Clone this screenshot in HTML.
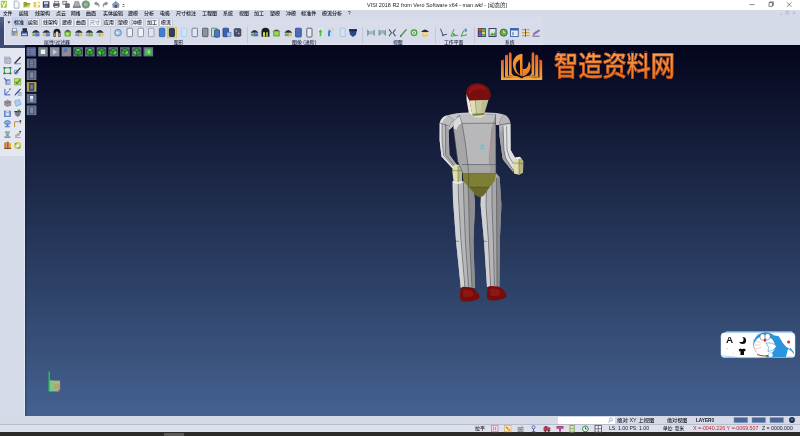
<!DOCTYPE html>
<html lang="zh-CN">
<head>
<meta charset="utf-8">
<title>VISI 2018 R2 from Vero Software x64 - man.wkf</title>
<style>
html,body{margin:0;padding:0;}
body{width:800px;height:436px;overflow:hidden;position:relative;background:#d5dae9;font-family:"Liberation Sans","Noto Sans CJK SC",sans-serif;}
.abs{position:absolute;}
#title{left:0;top:0;width:800px;height:9.6px;background:#fff;}
#chrome{left:0;top:9.6px;width:800px;height:35.4px;background:#d5dae9;}
#leftdark{left:0;top:17.4px;width:4px;height:31px;background:linear-gradient(to bottom,#56668e,#3d4b73 40%);}
#ribbon{left:4px;top:17.4px;width:539px;height:27.4px;background:linear-gradient(to bottom,#d9ddeb,#d7dbea);border-left:1.6px solid #e6e9f3;border-bottom:0.6px solid #e2e5f0;box-sizing:border-box;}
#leftband{left:0;top:45px;width:25.3px;height:3.4px;background:#3d4b73;}
#lefttool{left:0;top:48px;width:25.3px;height:107.5px;background:#e3e7f1;border-bottom:0.6px solid #c6cbdb;}
#leftrest{left:0;top:156px;width:25.3px;height:260px;background:#d6dbea;}
#view{left:25.3px;top:45px;width:775px;height:371px;background:linear-gradient(to bottom,#04051c 0%,#446290 100%);}
#status1{left:0;top:416px;width:800px;height:8px;background:#d5dae9;}
#status2{left:0;top:424px;width:800px;height:9px;background:#dde1ee;border-top:1px solid #b9bdc9;box-sizing:border-box;}
#taskbar{left:0;top:432.4px;width:800px;height:3.6px;background:#2d2a27;}
.t{position:absolute;white-space:pre;color:#14141e;line-height:1;font-weight:500;transform-origin:0 0;z-index:2;}
.tabbox{position:absolute;top:18.6px;height:7.6px;background:#eef0f8;box-shadow:0 0 0 0.5px #b2b8cc;box-sizing:border-box;}
.sep{position:absolute;top:27px;width:0.6px;height:16px;background:#c2c7d9;}
#gfx{position:absolute;left:0;top:0;width:800px;height:436px;}
#logo{background:linear-gradient(to bottom,#f8a456 0%,#f2842a 55%,#e87018 100%);-webkit-background-clip:text;background-clip:text;-webkit-text-fill-color:transparent;color:#ef7f22;-webkit-text-stroke:0.5px rgba(176,62,20,0.85);}
</style>
</head>
<body>
<div class="abs" id="title"></div>
<div class="abs" id="chrome"></div>
<div class="abs" id="ribbon"></div>
<div class="abs" id="leftdark"></div>
<div class="abs" id="leftband"></div>
<div class="abs" id="lefttool"></div>
<div class="abs" id="leftrest"></div>
<div class="abs" id="view"></div>
<div class="abs" id="status1"></div>
<div class="abs" id="status2"></div>
<div class="abs" id="taskbar"></div>
<div class="tabbox" style="left:12.5px;width:13.0px;background:#c6d4ee;top:17.6px;height:8.8px;box-shadow:0 0 0 0.4px #a8bce0;"></div>
<div class="tabbox" style="left:27.5px;width:11.5px;background:#eef0f8;"></div>
<div class="tabbox" style="left:41.5px;width:17.0px;background:#eef0f8;"></div>
<div class="tabbox" style="left:61px;width:11.5px;background:#eef0f8;"></div>
<div class="tabbox" style="left:75px;width:11.5px;background:#eef0f8;"></div>
<div class="tabbox" style="left:89px;width:11.5px;background:#eef0f8;"></div>
<div class="tabbox" style="left:103.5px;width:11.5px;background:#eef0f8;"></div>
<div class="tabbox" style="left:117.5px;width:11.5px;background:#eef0f8;"></div>
<div class="tabbox" style="left:131.5px;width:11.5px;background:#eef0f8;"></div>
<div class="tabbox" style="left:146px;width:11.5px;background:#eef0f8;"></div>
<div class="tabbox" style="left:160px;width:12px;background:#eef0f8;"></div>
<div class="sep" style="left:110px"></div>
<div class="sep" style="left:247px"></div>
<div class="sep" style="left:362px"></div>
<div class="sep" style="left:435px"></div>
<div class="sep" style="left:474px"></div>
<div class="abs" style="left:24.4px;top:48.4px;width:0.9px;height:367.6px;background:#e2e8f6"></div>
<div class="abs" style="left:25.3px;top:45px;width:1.6px;height:371px;background:linear-gradient(to right,rgba(10,14,40,0.35),rgba(10,14,40,0))"></div>
<div class="abs" style="left:558px;top:416.5px;width:57px;height:7px;background:#fff"></div>
<div class="abs" style="left:164px;top:432.6px;width:20px;height:3.4px;background:#5c5a57"></div>
<span class="t" style="left:367.0px;top:2.3px;font-size:10.6px;font-weight:400;color:#1c1c1c;transform:scale(0.5136,0.5000);">VISI 2018 R2 from Vero Software x64 - man.wkf - [动态的]</span>
<span class="t" style="left:3.0px;top:11.3px;font-size:10px;font-weight:500;color:#14141e;transform:scale(0.4650,0.5000);">文件</span>
<span class="t" style="left:19.0px;top:11.3px;font-size:10px;font-weight:500;color:#14141e;transform:scale(0.4750,0.5000);">编辑</span>
<span class="t" style="left:35.0px;top:11.3px;font-size:10px;font-weight:500;color:#14141e;transform:scale(0.5000,0.5000);">线架构</span>
<span class="t" style="left:56.0px;top:11.3px;font-size:10px;font-weight:500;color:#14141e;transform:scale(0.5000,0.5000);">点云</span>
<span class="t" style="left:71.0px;top:11.3px;font-size:10px;font-weight:500;color:#14141e;transform:scale(0.4750,0.5000);">网格</span>
<span class="t" style="left:86.0px;top:11.3px;font-size:10px;font-weight:500;color:#14141e;transform:scale(0.5000,0.5000);">曲面</span>
<span class="t" style="left:103.0px;top:11.3px;font-size:10px;font-weight:500;color:#14141e;transform:scale(0.5000,0.5000);">实体编辑</span>
<span class="t" style="left:128.0px;top:11.3px;font-size:10px;font-weight:500;color:#14141e;transform:scale(0.5000,0.5000);">建模</span>
<span class="t" style="left:144.0px;top:11.3px;font-size:10px;font-weight:500;color:#14141e;transform:scale(0.5000,0.5000);">分析</span>
<span class="t" style="left:160.0px;top:11.3px;font-size:10px;font-weight:500;color:#14141e;transform:scale(0.5000,0.5000);">电极</span>
<span class="t" style="left:176.0px;top:11.3px;font-size:10px;font-weight:500;color:#14141e;transform:scale(0.5000,0.5000);">尺寸标注</span>
<span class="t" style="left:202.0px;top:11.3px;font-size:10px;font-weight:500;color:#14141e;transform:scale(0.5000,0.5000);">工程图</span>
<span class="t" style="left:223.0px;top:11.3px;font-size:10px;font-weight:500;color:#14141e;transform:scale(0.5000,0.5000);">系统</span>
<span class="t" style="left:239.0px;top:11.3px;font-size:10px;font-weight:500;color:#14141e;transform:scale(0.5000,0.5000);">视图</span>
<span class="t" style="left:254.0px;top:11.3px;font-size:10px;font-weight:500;color:#14141e;transform:scale(0.5000,0.5000);">加工</span>
<span class="t" style="left:270.0px;top:11.3px;font-size:10px;font-weight:500;color:#14141e;transform:scale(0.5000,0.5000);">塑模</span>
<span class="t" style="left:286.0px;top:11.3px;font-size:10px;font-weight:500;color:#14141e;transform:scale(0.5000,0.5000);">冲模</span>
<span class="t" style="left:301.0px;top:11.3px;font-size:10px;font-weight:500;color:#14141e;transform:scale(0.5167,0.5000);">标准件</span>
<span class="t" style="left:322.0px;top:11.3px;font-size:10px;font-weight:500;color:#14141e;transform:scale(0.5000,0.5000);">模流分析</span>
<span class="t" style="left:348.0px;top:11.3px;font-size:10px;font-weight:500;color:#14141e;transform:scale(0.4674,0.5000);">?</span>
<span class="t" style="left:14.1px;top:19.6px;font-size:10px;font-weight:500;color:#14141e;transform:scale(0.4900,0.5000);">标准</span>
<span class="t" style="left:28.4px;top:19.6px;font-size:10px;font-weight:500;color:#14141e;transform:scale(0.4900,0.5000);">编辑</span>
<span class="t" style="left:42.6px;top:19.6px;font-size:10px;font-weight:500;color:#14141e;transform:scale(0.4900,0.5000);">线架构</span>
<span class="t" style="left:61.9px;top:19.6px;font-size:10px;font-weight:500;color:#14141e;transform:scale(0.4900,0.5000);">建模</span>
<span class="t" style="left:75.8px;top:19.6px;font-size:10px;font-weight:500;color:#14141e;transform:scale(0.4900,0.5000);">曲面</span>
<span class="t" style="left:89.8px;top:19.6px;font-size:10px;font-weight:500;color:#8a8ea2;transform:scale(0.4900,0.5000);">尺寸</span>
<span class="t" style="left:104.3px;top:19.6px;font-size:10px;font-weight:500;color:#14141e;transform:scale(0.4900,0.5000);">应用</span>
<span class="t" style="left:118.3px;top:19.6px;font-size:10px;font-weight:500;color:#14141e;transform:scale(0.4900,0.5000);">塑模</span>
<span class="t" style="left:132.3px;top:19.6px;font-size:10px;font-weight:500;color:#14141e;transform:scale(0.4900,0.5000);">冲模</span>
<span class="t" style="left:146.8px;top:19.6px;font-size:10px;font-weight:500;color:#14141e;transform:scale(0.4900,0.5000);">加工</span>
<span class="t" style="left:161.1px;top:19.6px;font-size:10px;font-weight:500;color:#14141e;transform:scale(0.4900,0.5000);">模流</span>
<span class="t" style="left:44.0px;top:39.5px;font-size:9.6px;font-weight:500;color:#2a3050;transform:scale(0.5134,0.5000);">属性/过滤器</span>
<span class="t" style="left:174.0px;top:39.5px;font-size:9.6px;font-weight:500;color:#2a3050;transform:scale(0.4899,0.5000);">图形</span>
<span class="t" style="left:292.0px;top:39.5px;font-size:9.6px;font-weight:500;color:#2a3050;transform:scale(0.5144,0.5000);">图像 (进阶)</span>
<span class="t" style="left:393.3px;top:39.5px;font-size:9.6px;font-weight:500;color:#2a3050;transform:scale(0.5055,0.5000);">视图</span>
<span class="t" style="left:444.0px;top:39.5px;font-size:9.6px;font-weight:500;color:#2a3050;transform:scale(0.5055,0.5000);">工作平面</span>
<span class="t" style="left:505.0px;top:39.5px;font-size:9.6px;font-weight:500;color:#2a3050;transform:scale(0.4899,0.5000);">系统</span>
<span class="t" style="left:617.0px;top:418.2px;font-size:10px;font-weight:500;color:#14141e;transform:scale(0.5457,0.5000);">绝对 XY 上视图</span>
<span class="t" style="left:667.0px;top:418.2px;font-size:10px;font-weight:500;color:#14141e;transform:scale(0.5125,0.5000);">绝对视图</span>
<span class="t" style="left:695.5px;top:418.3px;font-size:10px;font-weight:700;color:#14141e;transform:scale(0.4670,0.5000);">LAYER0</span>
<span class="t" style="left:475.0px;top:426.3px;font-size:10px;font-weight:500;color:#14141e;transform:scale(0.5000,0.5000);">拉平</span>
<span class="t" style="left:608.5px;top:426.4px;font-size:10px;font-weight:500;color:#14141e;transform:scale(0.5103,0.5000);">LS: 1.00 PS: 1.00</span>
<span class="t" style="left:663.0px;top:426.3px;font-size:10px;font-weight:500;color:#14141e;transform:scale(0.4609,0.5000);">单位: 毫米</span>
<span class="t" style="left:693.0px;top:426.4px;font-size:10px;font-weight:500;color:#cc2030;transform:scale(0.5322,0.5000);">X =-0040.226 Y =-0069.507</span>
<span class="t" style="left:761.5px;top:426.4px;font-size:10px;font-weight:500;color:#14141e;transform:scale(0.5201,0.5000);">Z = 0000.000</span>
<span class="t" id="logo" style="left:554.1px;top:52.84px;font-size:23.6px;font-weight:500;color:#ef7f22;transform:scale(1.0257,1.2100);">智造资料网</span>
<span class="t" style="left:726.4px;top:335.6px;font-size:9px;font-weight:700;color:#111;transform:scale(1.1077,1.0000);">A</span>
<svg id="gfx" viewBox="0 0 800 436" width="800" height="436">
<defs>
<filter id="b1" x="-10%" y="-10%" width="120%" height="120%"><feGaussianBlur stdDeviation="0.5"/></filter>
<filter id="b2" x="-10%" y="-10%" width="120%" height="120%"><feGaussianBlur stdDeviation="0.35"/></filter>
</defs>
<path d="M7.5 21.6h2.8l-1.4 1.8z" fill="#111"/>
<g stroke="#333" stroke-width="0.6" fill="none"><path d="M749.5 4.6h5"/><rect x="769" y="2.8" width="3.4" height="3.4"/><path d="M770 2.8v-0.9h3.4v3.4h-1"/><path d="M787 2.4l4.4 4.4M791.4 2.4l-4.4 4.4"/></g>
<g stroke="#9aa0b4" stroke-width="0.5" fill="none"><path d="M780 14.5h2.5"/><rect x="786" y="11.5" width="2.6" height="2.6"/><path d="M792.5 11.5l2.8 2.8M795.3 11.5l-2.8 2.8"/></g>
<g filter="url(#b2)"><rect x="0.8" y="0.8" width="6" height="7" rx="0.6" fill="#9ccc3c"/><path d="M2 2l1.8 4.6L5.6 2" stroke="#fff" stroke-width="1.1" fill="none"/><path d="M14.2 1h3.2l1.6 1.6v5.6h-4.8z" fill="#f4f6fa" stroke="#7a86a8" stroke-width="0.6"/><path d="M23.5 7.5l1.5-4.5h5.8l-1.5 4.5z" fill="#d8d43a"/><path d="M23.5 7.5v-5.5h3l0.8 1h2.5v1" fill="#8aa83a"/><rect x="33.5" y="2" width="6.5" height="5.5" fill="#e8cc5a"/><rect x="36" y="1" width="2" height="6.5" fill="#f8f4e0"/><rect x="37" y="3" width="3.5" height="2" fill="#f8f4e0"/><rect x="42.8" y="1.2" width="6.6" height="6.6" rx="0.5" fill="#3a3c6a"/><rect x="44" y="1.8" width="4.2" height="2.6" fill="#c8cce4"/><rect x="44.5" y="5.4" width="3" height="2.4" fill="#8a8eb8"/><rect x="53.2" y="3.2" width="6.4" height="3.6" fill="#5a5e6a"/><rect x="54.6" y="1.2" width="4.2" height="2.4" fill="#e8eaf0" stroke="#4a4e5a" stroke-width="0.5"/><rect x="54.4" y="5.8" width="4" height="2" fill="#dcdfe8" stroke="#4a4e5a" stroke-width="0.4"/><rect x="62.8" y="1.2" width="4" height="3.4" fill="#d8dce8" stroke="#4a4e5a" stroke-width="0.6"/><rect x="65.4" y="3.8" width="4" height="3.8" fill="#6a6e7a" stroke="#3a3e4a" stroke-width="0.5"/><path d="M75 1.4h3.6l2 6.2h-7.6z" fill="#a8aab0" stroke="#6a6c74" stroke-width="0.5"/><rect x="73" y="6.2" width="7.6" height="1.5" fill="#7a7c84"/><circle cx="85.8" cy="4.5" r="3.8" fill="#6c9c72"/><circle cx="85.8" cy="4.5" r="2" fill="#9ab8a0"/><circle cx="85.8" cy="4.5" r="3.8" fill="none" stroke="#8a9490" stroke-width="0.8"/><path d="M94 3.2l2.5-2v1.3c2 0 3 1.5 3 3.2 0 1-.3 1.6-.8 2.1.2-2-.6-3.1-2.2-3.1v1.4z" fill="#8a8e98"/><path d="M108.2 3.2l-2.5-2v1.3c-2 0-3 1.5-3 3.2 0 1 .3 1.6.8 2.1-.2-2 .6-3.1 2.2-3.1v1.4z" fill="#8a8e98"/><path d="M112.5 4.8l3.3-3.2 3.3 3.2v3h-6.6z" fill="#8a98b8"/><rect x="114.6" y="5" width="2.4" height="2.8" fill="#4a5478"/><path d="M112 5l3.8-3.6 3.8 3.6" stroke="#5a6488" stroke-width="0.7" fill="none"/><path d="M122.4 4h2.2l-1.1 1.3z" fill="#333"/><path d="M122.4 6.5h2.2" stroke="#333" stroke-width="0.5"/></g>
<g filter="url(#b2)"><rect x="11.5" y="30.2" width="6" height="5.5" fill="#8a93a8"/><rect x="12.5" y="28.2" width="4" height="3" fill="#e8ecf4" stroke="#66708a" stroke-width="0.5"/><rect x="15" y="33.2" width="3" height="3" fill="#d9c04a"/><rect x="21" y="31.2" width="7" height="5" fill="#3c5a9a"/><rect x="22.5" y="28.2" width="4.5" height="4" fill="#2c3144"/><rect x="22" y="33.7" width="5" height="1.5" fill="#cfd6ea"/><path d="M31.8 32.7Q35.8 27.3 39.8 32.7Z" fill="#2b2f3a"/><path d="M35.8 32.5v4" stroke="#555a66" stroke-width="0.8"/><rect x="35.9" y="33.3" width="3.6" height="3" fill="#4d79d8"/><rect x="32.3" y="33.5" width="3" height="2.6" fill="#6fb24a"/><path d="M42.3 32.7Q46.3 27.3 50.3 32.7Z" fill="#2b2f3a"/><path d="M46.3 32.5v4" stroke="#555a66" stroke-width="0.8"/><rect x="46.4" y="33.3" width="3.6" height="3" fill="#5b86dc"/><rect x="42.8" y="33.5" width="3" height="2.6" fill="#d8c23e"/><path d="M53.5 36.7v-4.5a3.5 3.5 0 0 1 7 0v4.5h-2.2v-4a1.3 1.3 0 0 0-2.6 0v4z" fill="#1d1d22"/><rect x="54" y="33.2" width="1.4" height="3" fill="#e08a2a"/><rect x="58.6" y="33.2" width="1.4" height="3" fill="#e08a2a"/><path d="M64 32.4Q67.7 27.2 71.4 32.4Z" fill="#3d4a3a"/><rect x="64.5" y="31.4" width="6.5" height="5.2" rx="1" fill="#6fb63c"/><rect x="66" y="32.7" width="3" height="2.5" fill="#b5e07a"/><path d="M74.8 32.7Q78.8 27.3 82.8 32.7Z" fill="#2b2f3a"/><path d="M78.8 32.5v4" stroke="#555a66" stroke-width="0.8"/><rect x="78.89999999999999" y="33.3" width="3.6" height="3" fill="#d8c84a"/><rect x="75.3" y="33.5" width="3" height="2.6" fill="#8a94a8"/><path d="M85.3 32.7Q89.3 27.3 93.3 32.7Z" fill="#2b2f3a"/><path d="M89.3 32.5v4" stroke="#555a66" stroke-width="0.8"/><rect x="89.39999999999999" y="33.3" width="3.6" height="3" fill="#78c048"/><rect x="85.8" y="33.5" width="3" height="2.6" fill="#9aa3b8"/><path d="M95.8 32.7Q99.8 27.3 103.8 32.7Z" fill="#2b2f3a"/><path d="M99.8 32.5v4" stroke="#555a66" stroke-width="0.8"/><rect x="99.89999999999999" y="33.3" width="3.6" height="3" fill="#e0d040"/><rect x="96.3" y="33.5" width="3" height="2.6" fill="#c8cce0"/><circle cx="118" cy="32.7" r="3.4" fill="#9fc4e8" stroke="#5a7fb0" stroke-width="0.8"/><path d="M116.5 31.2l3 1.5-3 1.5" fill="#e8f0fa"/><rect x="127" y="28.2" width="5.5" height="8.5" rx="0.8" fill="#eef0f6" stroke="#6a7086" stroke-width="0.8"/><rect x="138" y="28.2" width="5.5" height="8.5" rx="0.8" fill="#f2f3f8" stroke="#7a8096" stroke-width="0.8"/><rect x="148.5" y="28.2" width="5.5" height="8.5" rx="0.8" fill="#e4e6ee" stroke="#8a90a4" stroke-width="0.8"/><rect x="159.3" y="28.2" width="5.5" height="8.5" rx="0.8" fill="#3f7fd0" stroke="#2d5ea8" stroke-width="0.8"/><rect x="167.3" y="27.2" width="9.2" height="10.6" fill="#f2dc6a" stroke="#d8b830" stroke-width="0.6"/><rect x="169.3" y="28.5" width="5.2" height="8" rx="0.8" fill="#2d3c66" stroke="#1e2644" stroke-width="0.8"/><rect x="181.3" y="28.2" width="5.5" height="8.5" rx="0.8" fill="#cfe4f6" stroke="#a8cbe8" stroke-width="0.8"/><rect x="192" y="28.2" width="5.5" height="8.5" rx="0.8" fill="#dfe6f2" stroke="#5a6a92" stroke-width="0.8"/><rect x="202.5" y="28.2" width="5.5" height="8.5" rx="0.8" fill="#8c929c" stroke="#4c5260" stroke-width="0.8"/><rect x="211.5" y="28.2" width="5.5" height="8.5" rx="0.8" fill="#c8dcc8" stroke="#3a7a5a" stroke-width="0.8"/><rect x="214.5" y="29.7" width="5" height="7.5" rx="0.8" fill="#4a78c0" stroke="#2c4a88" stroke-width="0.8"/><rect x="223" y="28.2" width="5.5" height="8.5" rx="0.8" fill="#3c62b0" stroke="#27407a" stroke-width="0.8"/><rect x="227" y="32.2" width="4" height="4.5" fill="#a8c4ea" stroke="#3c62b0" stroke-width="0.5"/><rect x="234.3" y="28.7" width="6.5" height="7.5" rx="0.8" fill="#4a5468" stroke="#2c3244" stroke-width="0.8"/><rect x="235.5" y="30.2" width="1.5" height="1.5" fill="#9ab0d0"/><rect x="238" y="32.7" width="1.5" height="1.5" fill="#9ab0d0"/><path d="M250.5 32.7Q254.5 27.3 258.5 32.7Z" fill="#2b2f3a"/><path d="M254.5 32.5v4" stroke="#555a66" stroke-width="0.8"/><rect x="254.6" y="33.3" width="3.6" height="3" fill="#4d79d8"/><rect x="251" y="33.5" width="3" height="2.6" fill="#58a848"/><path d="M261.5 36.7v-5a4 4 0 0 1 8 0v5z" fill="#1c1e22"/><rect x="263" y="32.2" width="2" height="4.5" fill="#c8d848"/><rect x="266" y="32.2" width="2" height="4.5" fill="#88b838"/><path d="M272.5 31.7Q276.5 27.2 280.5 31.7Z" fill="#39463a"/><rect x="273" y="30.8" width="7" height="5.8" rx="1.2" fill="#78b83a"/><rect x="274.5" y="32.2" width="4" height="2.5" fill="#a8d860"/><path d="M284.3 32.7Q288.3 27.3 292.3 32.7Z" fill="#2b2f3a"/><path d="M288.3 32.5v4" stroke="#555a66" stroke-width="0.8"/><rect x="288.40000000000003" y="33.3" width="3.6" height="3" fill="#c8d048"/><rect x="284.8" y="33.5" width="3" height="2.6" fill="#68a848"/><rect x="295.5" y="28.2" width="5.8" height="8.8" rx="0.8" fill="#4a6cb4" stroke="#2f4a8a" stroke-width="0.8"/><rect x="306.8" y="28.2" width="5.2" height="8.8" rx="0.8" fill="#e8eaf0" stroke="#3c4458" stroke-width="0.8"/><rect x="318" y="28.2" width="5" height="8.5" rx="0.8" fill="#dceee0"/><path d="M320.5 29.2l2.3 3h-1.4v4h-1.8v-4h-1.4z" fill="#4fb85a"/><rect x="328.5" y="28.2" width="5" height="8.5" rx="0.8" fill="#bfe0f4"/><path d="M329 29.2l2.3 3h-1.4v4h-1.8v-4" fill="#3c78c8"/><rect x="331.5" y="28.2" width="2" height="2" fill="#e8d86a"/><rect x="340.2" y="28.2" width="5" height="8.5" rx="0.8" fill="#d4e2f2" stroke="#a4bcd8" stroke-width="0.8"/><path d="M349 29.2h8l-1 5.5l-3 2.3l-3-2.3z" fill="#2b4a8c"/><path d="M349 29.2h8l-0.4 2h-7.2z" fill="#17264e"/><path d="M367 29.2l4 3.5-4 3.5zM375 29.2l-4 3.5 4 3.5z" fill="#7aa4a8"/><rect x="369" y="31.2" width="4.5" height="3" fill="#a8b4c4"/><path d="M378.5 29.2l4 3.5-4 3.5zM386 29.2l-3.5 3.5 3.5 3.5z" fill="#78a0a4"/><rect x="380" y="30.2" width="4.5" height="3" fill="#a0aebe"/><path d="M389 29.2l2.5 3.5-2.5 3.5M395.5 29.2l-2.5 3.5 2.5 3.5" stroke="#4a5060" stroke-width="1.1" fill="none"/><path d="M400.5 36.2l6-7" stroke="#48a048" stroke-width="1.4"/><path d="M400 36.8l1.6-0.4-1.2-1.2z" fill="#333"/><circle cx="414" cy="32.7" r="2.7" fill="#fff" stroke="#4aa83c" stroke-width="1.5"/><rect x="413.3" y="31.5" width="1.4" height="2.4" fill="#4aa83c"/><path d="M421 32.0Q425 27.0 429 32.0Z" fill="#2b2f3a"/><rect x="422.3" y="32.2" width="5.4" height="4.2" rx="1" fill="#e8c850"/><rect x="423.3" y="33.4" width="3.4" height="1" fill="#fff4c0"/><path d="M440.5 28.7l2.5 6.5 4-1" stroke="#3a4050" stroke-width="0.9" fill="none"/><circle cx="443" cy="35.2" r="1.1" fill="#3c6cc8"/><path d="M451 36.2l3-7 M451 36.2l7-1" stroke="#4aa048" stroke-width="1" fill="none"/><path d="M453 33.2l2.5 2.5" stroke="#4aa048" stroke-width="1.4"/><path d="M461 36.2l3-6 M461 36.2l6-1.5" stroke="#4aa048" stroke-width="1" fill="none"/><rect x="464.5" y="28.7" width="2.5" height="3" fill="#6c8cd0"/><rect x="477.8" y="28.2" width="8" height="8.8" fill="#2a2c34"/><rect x="478.4" y="28.8" width="3.4" height="2.6" fill="#d84a3a"/><rect x="482" y="28.8" width="3.2" height="2.6" fill="#58b848"/><rect x="478.4" y="31.599999999999998" width="3.4" height="2.4" fill="#3c68d0"/><rect x="482" y="31.599999999999998" width="3.2" height="2.4" fill="#e8d040"/><rect x="478.4" y="34.2" width="3.4" height="2.2" fill="#b048b8"/><rect x="482" y="34.2" width="3.2" height="2.2" fill="#48b8b0"/><rect x="489" y="28.5" width="7" height="8" fill="#d8e4ee" stroke="#3a4254" stroke-width="1"/><path d="M490 35.5l2-3 1.5 1.5 1.5-2 1 3.5z" fill="#4a9a4a"/><circle cx="503.7" cy="32.6" r="3.6" fill="#6aa84a" stroke="#3c6c34" stroke-width="0.9"/><path d="M503.7 30.4v2.4h1.8" stroke="#fff" stroke-width="0.7" fill="none"/><rect x="510.5" y="28.5" width="7.8" height="8" fill="#e4ecf6" stroke="#3c62a8" stroke-width="0.9"/><rect x="510.5" y="28.5" width="7.8" height="2" fill="#3c62a8"/><rect x="512" y="32.2" width="2" height="3" fill="#8aa4d0"/><path d="M522 29.7h3M526.5 29.7h3M522 32.7h7.5M522 35.7h3M526.5 35.7h3" stroke="#c8a830" stroke-width="1.2"/><path d="M525.5 28.7v8" stroke="#3a3e4c" stroke-width="0.8"/><path d="M532.5 36.2l1-3.5 5.5-3.5 1.2 1.8-5.5 3.8z" fill="#8a78b0"/><path d="M532.5 36.2h7" stroke="#5a5e70" stroke-width="0.9"/></g>
<g filter="url(#b2)"><rect x="26.5" y="47.2" width="9.6" height="9.2" fill="#55648e"/><path d="M27.5 49.7h7.6M27.5 51.800000000000004h7.6M27.5 53.900000000000006h7.6" stroke="#8694b8" stroke-width="0.8"/><path d="M30.0 48.2v7.199999999999999" stroke="#44527a" stroke-width="0.6"/><rect x="38.2" y="47.2" width="9.6" height="9.2" fill="#76848e"/><rect x="40.800000000000004" y="49.6" width="4.4" height="4.4" fill="#eef2f4"/><rect x="49.9" y="47.2" width="9.6" height="9.2" fill="#848e9c"/><path d="M52.9 49.2l4.5 2.8-4.5 2.8z" fill="#c4ccd8"/><rect x="61.599999999999994" y="47.2" width="9.6" height="9.2" fill="#888a9c"/><rect x="63.599999999999994" y="48.400000000000006" width="3.5" height="3.5" fill="#4a78c8"/><path d="M64.6 55.2l4.5-4.5" stroke="#c08a5a" stroke-width="1.2"/><rect x="73.3" y="47.2" width="9.6" height="9.2" fill="#687288"/><path d="M78.1 48.2L81.6 49.900000000000006L81.6 53.800000000000004L78.1 55.5L74.6 53.800000000000004L74.6 49.900000000000006Z" fill="#34a83c"/><path d="M78.1 48.2L81.6 49.900000000000006L78.1 51.7L74.6 49.900000000000006Z" fill="#58d858"/><path d="M78.1 48.2L81.6 49.900000000000006L81.6 53.800000000000004L78.1 55.5L74.6 53.800000000000004L74.6 49.900000000000006ZM78.1 51.7L74.6 49.900000000000006M78.1 51.7L81.6 49.900000000000006M78.1 51.7L78.1 55.5" fill="none" stroke="#14301c" stroke-width="0.6"/><rect x="85.0" y="47.2" width="9.6" height="9.2" fill="#687288"/><path d="M89.8 48.2L93.3 49.900000000000006L93.3 53.800000000000004L89.8 55.5L86.3 53.800000000000004L86.3 49.900000000000006Z" fill="#34a83c"/><path d="M89.8 48.2L93.3 49.900000000000006L89.8 51.7L86.3 49.900000000000006Z" fill="#58d858"/><path d="M89.8 48.2L93.3 49.900000000000006L93.3 53.800000000000004L89.8 55.5L86.3 53.800000000000004L86.3 49.900000000000006ZM89.8 51.7L86.3 49.900000000000006M89.8 51.7L93.3 49.900000000000006M89.8 51.7L89.8 55.5" fill="none" stroke="#14301c" stroke-width="0.6"/><rect x="96.69999999999999" y="47.2" width="9.6" height="9.2" fill="#687288"/><path d="M101.49999999999999 48.2L104.99999999999999 49.900000000000006L104.99999999999999 53.800000000000004L101.49999999999999 55.5L97.99999999999999 53.800000000000004L97.99999999999999 49.900000000000006Z" fill="#34a83c"/><path d="M97.99999999999999 49.900000000000006L101.49999999999999 51.7L101.49999999999999 55.5L97.99999999999999 53.800000000000004Z" fill="#58d858"/><path d="M101.49999999999999 48.2L104.99999999999999 49.900000000000006L104.99999999999999 53.800000000000004L101.49999999999999 55.5L97.99999999999999 53.800000000000004L97.99999999999999 49.900000000000006ZM101.49999999999999 51.7L97.99999999999999 49.900000000000006M101.49999999999999 51.7L104.99999999999999 49.900000000000006M101.49999999999999 51.7L101.49999999999999 55.5" fill="none" stroke="#14301c" stroke-width="0.6"/><rect x="108.39999999999999" y="47.2" width="9.6" height="9.2" fill="#687288"/><path d="M113.19999999999999 48.2L116.69999999999999 49.900000000000006L116.69999999999999 53.800000000000004L113.19999999999999 55.5L109.69999999999999 53.800000000000004L109.69999999999999 49.900000000000006Z" fill="#34a83c"/><path d="M116.69999999999999 49.900000000000006L113.19999999999999 51.7L113.19999999999999 55.5L116.69999999999999 53.800000000000004Z" fill="#58d858"/><path d="M113.19999999999999 48.2L116.69999999999999 49.900000000000006L116.69999999999999 53.800000000000004L113.19999999999999 55.5L109.69999999999999 53.800000000000004L109.69999999999999 49.900000000000006ZM113.19999999999999 51.7L109.69999999999999 49.900000000000006M113.19999999999999 51.7L116.69999999999999 49.900000000000006M113.19999999999999 51.7L113.19999999999999 55.5" fill="none" stroke="#14301c" stroke-width="0.6"/><rect x="120.1" y="47.2" width="9.6" height="9.2" fill="#687288"/><path d="M124.89999999999999 48.2L128.4 49.900000000000006L128.4 53.800000000000004L124.89999999999999 55.5L121.39999999999999 53.800000000000004L121.39999999999999 49.900000000000006Z" fill="#34a83c"/><path d="M128.4 49.900000000000006L124.89999999999999 51.7L124.89999999999999 55.5L128.4 53.800000000000004Z" fill="#58d858"/><path d="M124.89999999999999 48.2L128.4 49.900000000000006L128.4 53.800000000000004L124.89999999999999 55.5L121.39999999999999 53.800000000000004L121.39999999999999 49.900000000000006ZM124.89999999999999 51.7L121.39999999999999 49.900000000000006M124.89999999999999 51.7L128.4 49.900000000000006M124.89999999999999 51.7L124.89999999999999 55.5" fill="none" stroke="#14301c" stroke-width="0.6"/><rect x="131.8" y="47.2" width="9.6" height="9.2" fill="#687288"/><path d="M136.60000000000002 48.2L140.10000000000002 49.900000000000006L140.10000000000002 53.800000000000004L136.60000000000002 55.5L133.10000000000002 53.800000000000004L133.10000000000002 49.900000000000006Z" fill="#34a83c"/><path d="M133.10000000000002 49.900000000000006L136.60000000000002 51.7L136.60000000000002 55.5L133.10000000000002 53.800000000000004Z" fill="#58d858"/><path d="M136.60000000000002 48.2L140.10000000000002 49.900000000000006L140.10000000000002 53.800000000000004L136.60000000000002 55.5L133.10000000000002 53.800000000000004L133.10000000000002 49.900000000000006ZM136.60000000000002 51.7L133.10000000000002 49.900000000000006M136.60000000000002 51.7L140.10000000000002 49.900000000000006M136.60000000000002 51.7L136.60000000000002 55.5" fill="none" stroke="#14301c" stroke-width="0.6"/><rect x="143.5" y="47.2" width="9.6" height="9.2" fill="#687288"/><rect x="145.1" y="48.7" width="6.4" height="6.4" rx="1" fill="#44c444"/><rect x="148.1" y="50.400000000000006" width="1.6" height="3" fill="#a8f0a0"/><rect x="26.8" y="58.6" width="9.6" height="9.6" fill="#6c7690"/><rect x="29.3" y="60.1" width="4.6" height="6.8" fill="#7c86a0" stroke="#3c4662" stroke-width="0.7"/><path d="M29.3 62.4h4.6M29.3 64.6h4.6" stroke="#3c4662" stroke-width="0.6"/><rect x="26.8" y="70.4" width="9.6" height="9.6" fill="#6c7690"/><rect x="29.3" y="71.9" width="4.6" height="6.8" fill="#7c86a0" stroke="#3c4662" stroke-width="0.7"/><rect x="26.8" y="82.1" width="9.6" height="9.6" fill="#bfa954"/><rect x="29.2" y="83.69999999999999" width="4.8" height="6.6" fill="#4a5878" stroke="#2a3450" stroke-width="0.6"/><rect x="30.400000000000002" y="85.1" width="2.4" height="3.6" fill="#6a82b8"/><rect x="26.8" y="93.8" width="9.6" height="9.6" fill="#6a7490"/><rect x="29.400000000000002" y="95.2" width="4.4" height="7" fill="#9aa8c8" stroke="#3a4664" stroke-width="0.6"/><rect x="30.2" y="96.0" width="2.8" height="2.6" fill="#e8eef8"/><rect x="26.8" y="105.5" width="9.6" height="9.6" fill="#6c7690"/><rect x="29.3" y="107.0" width="4.6" height="6.8" fill="#7c86a0" stroke="#3c4662" stroke-width="0.7"/></g>
<g filter="url(#b2)"><rect x="4.4" y="57.0" width="5.5" height="6" fill="#c8ccd8" stroke="#9aa0b4" stroke-width="0.6"/><rect x="5.9" y="58.5" width="5" height="5" fill="#b8bed0" stroke="#9096ac" stroke-width="0.5"/><path d="M14.6 63.5l6-6.5" stroke="#2c2e3a" stroke-width="1.3"/><path d="M14.1 63.8h7" stroke="#6a7088" stroke-width="0.8"/><rect x="4.4" y="67.82000000000001" width="6" height="5.6" fill="none" stroke="#3c9a5a" stroke-width="1"/><path d="M3.4 67.02000000000001h2v1.6h-2zM9.4 67.02000000000001h2v1.6h-2zM3.4 72.62h2v1.6h-2zM9.4 72.62h2v1.6h-2z" fill="#2c7a48"/><path d="M15.1 73.62l5.5-6" stroke="#2c2e3a" stroke-width="1.3"/><circle cx="16.1" cy="72.12" r="2" fill="none" stroke="#4a6ab8" stroke-width="0.8"/><rect x="5.4" y="79.24" width="5" height="5.5" fill="#7a8cb8"/><path d="M3.9 77.74l3.5 4" stroke="#3c5ab0" stroke-width="1.1"/><rect x="6.9" y="80.74" width="3" height="3" fill="#b8c4e0"/><rect x="14.4" y="78.74" width="6.4" height="6.2" fill="#c8dc5a" stroke="#7aa83a" stroke-width="0.7"/><path d="M15.6 81.74l1.6 1.8 3-4.2" stroke="#2c8a3a" stroke-width="1.2" fill="none"/><path d="M4.9 88.86v6h5.5" stroke="#3c62c0" stroke-width="1" fill="none"/><path d="M4.9 94.86l4-4" stroke="#3c62c0" stroke-width="1"/><circle cx="9.9" cy="89.36" r="1" fill="#4aa84a"/><path d="M15.1 94.86l5.5-6" stroke="#3454a8" stroke-width="1.4"/><path d="M14.6 95.46l1.5-0.3-1-1.2z" fill="#c83a3a"/><rect x="18.1" y="92.36" width="3" height="3" fill="#c8ccd8" stroke="#7a80a0" stroke-width="0.5"/><path d="M4.2 101.47999999999999l3.5-2 3.5 2v4l-3.5 1.5-3.5-1.5z" fill="#9a94a0"/><path d="M4.2 101.47999999999999l3.5 1.6 3.5-1.6" stroke="#5a5660" stroke-width="0.6" fill="none"/><rect x="7.9" y="102.97999999999999" width="3" height="3" fill="#b09078"/><path d="M14.6 100.97999999999999l5-1.5 1.5 5-5 1.8z" fill="#a8d0f0" stroke="#6a9ad0" stroke-width="0.6"/><rect x="4.4" y="111.1" width="6" height="5.5" fill="#8aa4d8" stroke="#4a68b0" stroke-width="0.7"/><rect x="5.9" y="109.89999999999999" width="3" height="2.5" fill="#c8d4ec"/><rect x="5.9" y="113.1" width="3" height="2.5" fill="#dce4f4"/><path d="M14.4 111.6h6.6l-1 4-2.3 1.3-2.3-1.3z" fill="#7a7e88"/><path d="M14.4 111.6h6.6" stroke="#2c2e38" stroke-width="1"/><rect x="17.6" y="109.6" width="2.5" height="2" fill="#4a8a4a"/><ellipse cx="7.4" cy="122.52" rx="3" ry="2" fill="#8ab0e0" stroke="#4a70b8" stroke-width="0.7"/><rect x="6.6" y="123.72" width="1.6" height="2.5" fill="#5a7ab8"/><rect x="4.9" y="126.02" width="5" height="1.3" fill="#6a88c0"/><path d="M14.6 127.22v-5.5h6v2" stroke="#c08a4a" stroke-width="1" fill="none"/><rect x="19.6" y="120.22" width="1.6" height="1.6" fill="#3a3c48"/><rect x="4.9" y="131.33999999999997" width="5" height="2" fill="#9aa0a8"/><rect x="5.9" y="133.33999999999997" width="3" height="3" fill="#7aa8a8"/><rect x="4.4" y="136.33999999999997" width="6" height="1.6" fill="#8a9098"/><path d="M14.6 136.33999999999997q2-4 6-3.5l-1 3q-2-0.5-3 1.5z" fill="#c0a8b0"/><path d="M15.1 137.53999999999996h5.5" stroke="#9a9aa8" stroke-width="0.8"/><rect x="19.4" y="130.93999999999997" width="1.6" height="1.6" fill="#3a3c48"/><rect x="4.2" y="142.45999999999998" width="2.2" height="6" fill="#d8802a"/><rect x="6.6" y="141.76" width="2.2" height="6.7" fill="#b8601a"/><rect x="9.0" y="143.15999999999997" width="2" height="5.3" fill="#e8a83a"/><rect x="4.2" y="147.95999999999998" width="7" height="0.9" fill="#6a4020"/><circle cx="17.6" cy="145.45999999999998" r="2.8" fill="none" stroke="#d8c83a" stroke-width="1.5"/><path d="M14.6 142.95999999999998l2.5 0.5-1.5 2z" fill="#58a838"/><path d="M17.6 148.26a2.8 2.8 0 0 0 2.6-1.8" stroke="#68b040" stroke-width="1.5" fill="none"/></g>
<g filter="url(#b2)"><rect x="491.5" y="425.3" width="6.5" height="6.5" fill="#f4d8e4" stroke="#c878a0" stroke-width="0.7"/><path d="M493.5 426.8v3.5M495.5 426.8v3.5" stroke="#d89030" stroke-width="0.9"/><rect x="504.5" y="425.3" width="6.5" height="6.5" fill="#f8e8c8" stroke="#d8a850" stroke-width="0.6"/><path d="M506.0 426.8l3.5 3.5" stroke="#d06028" stroke-width="1.2"/><circle cx="509.1" cy="429.90000000000003" r="1.2" fill="#e8b030"/><rect x="518.0" y="427.3" width="5" height="4.5" fill="#c8ccd8" stroke="#6a7088" stroke-width="0.6"/><path d="M521.5 425.8l1.5 1.5" stroke="#d8a030" stroke-width="1"/><rect x="519.0" y="428.5" width="2.8" height="2" fill="#7a84a8"/><circle cx="533.5" cy="427.3" r="1.6" fill="none" stroke="#3c5aa8" stroke-width="0.8"/><path d="M533.5 428.8v3M532.0 431.8h3.4" stroke="#3c5aa8" stroke-width="0.9"/><rect x="543.5" y="427.3" width="6.8" height="3.6" fill="#c83848"/><rect x="544.5" y="426.1" width="3" height="2" fill="#7a3a68"/><circle cx="545.3" cy="431.1" r="1" fill="#3a3c58"/><circle cx="548.7" cy="431.1" r="1" fill="#3a3c58"/><rect x="556.5" y="426.3" width="7" height="2.6" fill="#d84878"/><rect x="559.1" y="428.7" width="1.8" height="3" fill="#8a4a9a"/><rect x="556.5" y="426.3" width="7" height="0.8" fill="#7a3a88"/><rect x="570" y="425.3" width="4.2" height="6.8" fill="#e8e4a0" stroke="#5a9a5a" stroke-width="0.7"/><path d="M570 428.7h4.2" stroke="#5a9a5a" stroke-width="0.6"/><circle cx="585.4" cy="428.90000000000003" r="2.9" fill="#f2f8f0" stroke="#2c7a3a" stroke-width="0.9"/><path d="M585.4 426.90000000000003v2.2h1.5" stroke="#1c4a2a" stroke-width="0.8" fill="none"/><rect x="595" y="425.5" width="6.6" height="6.6" fill="#f0f2f6" stroke="#3a3e4c" stroke-width="0.7"/><path d="M598.3 425.5v6.6M595 428.8h6.6" stroke="#3a3e4c" stroke-width="0.6"/><circle cx="611" cy="419.6" r="1.5" fill="none" stroke="#7a8098" stroke-width="0.6"/><path d="M609.9 420.8l-1.6 1.8" stroke="#7a8098" stroke-width="0.7"/><rect x="734" y="417.6" width="13.600000000000023" height="5" fill="#4a6698" stroke="#7a8cb0" stroke-width="0.5"/><rect x="752" y="417.6" width="13.399999999999977" height="5" fill="#4a6698" stroke="#7a8cb0" stroke-width="0.5"/><rect x="770" y="417.6" width="13.399999999999977" height="5" fill="#4a6698" stroke="#7a8cb0" stroke-width="0.5"/><circle cx="792" cy="420" r="2.9" fill="#1c2a4c"/><path d="M790.5 419q1.5-1.5 3 0.3-0.5 1.8-2 1.6z" fill="#4a78b8"/></g>
<g filter="url(#b2)"><defs><linearGradient id="lg" x1="0" y1="0" x2="0" y2="1"><stop offset="0" stop-color="#e8602a"/><stop offset="0.55" stop-color="#ee8430"/><stop offset="1" stop-color="#f2a438"/></linearGradient></defs><path d="M501 60.4L503.8 59.6L503.8 78.4L501 78.4Z" fill="url(#lg)"/><path d="M505 55.6L507.4 54.6L508 56L508 76.4L505 77.4Z" fill="url(#lg)"/><path d="M508.9 53L510.6 52L511.6 54L511.6 73.6L514 76L509 75.2Z" fill="url(#lg)"/><path d="M542.2 60.4L539.4 59.6L539.4 78.4L542.2 78.4Z" fill="url(#lg)"/><path d="M538.2 55.6L535.8 54.6L535.2 56L535.2 76.4L538.2 77.4Z" fill="url(#lg)"/><path d="M534.3 53L532.6 52L531.6 54L531.6 73.6L529.2 76L534.2 75.2Z" fill="url(#lg)"/><path d="M501 77.6L511 77.2Q518 76.4 521.6 78.4Q525 76.4 532 77.2L542.2 77.6L542.2 80L501 80Z" fill="#f2a63a"/><path d="M505 75.4L512 75.6Q518 76 521.6 78.2Q525 76 531 75.6L538.2 75.4L538.2 76.8L531 77Q525 77 521.6 79Q518 77 512 77L505 76.8Z" fill="#e88a30"/><defs><linearGradient id="lg2" x1="0" y1="0" x2="0.4" y2="1"><stop offset="0" stop-color="#f6a636"/><stop offset="1" stop-color="#ec7420"/></linearGradient></defs><path d="M522 53.8C516 54.4 512.6 59.4 512.9 64.8C513.2 70.6 516.6 75 521.6 75.9L520.4 75.2C518.4 73.6 515.9 71 515.7 66.8C515.5 63.6 517.2 61.4 520 59.6L522.6 55Z" fill="url(#lg2)"/><path d="M520 58L522.4 54.4L522.7 76.3L521.4 76.2L520 75Z" fill="url(#lg2)"/><path d="M522.6 69C524.6 69.4 526.6 68.6 527.6 66.4C528.4 64.8 528.5 63 528.9 61.2C530.5 63.4 530.9 66 530.3 68.4C529.3 72.6 526 75.6 522.6 76.3Z" fill="url(#lg2)"/></g>
<g filter="url(#b1)"><path d="M452.6 181L453 200L456 241L460.8 288L475 288L473.4 241L475 205L474 192L469 186L463 181Z" fill="#aaaaac"/><path d="M452.6 181L453 200L456 241L460.8 288L465 288L461 241L458.6 200L458 181Z" fill="#d2d2d4"/><path d="M458 181L458.6 200L461 241L465 288L468.6 288L465.4 241L463.6 200L463 181Z" fill="#b8b8ba"/><path d="M468 186L468.6 200L469.6 241L472 288L475 288L473.4 241L475 205L474 192Z" fill="#8e8e90"/><path d="M458 181L458.6 200L461 241L465 288M463.4 183L463.8 200L465.4 241L468.6 288M468 186L468.6 200L469.6 241L472 288M456 241L459 241.6" stroke="#3e4046" stroke-width="0.5" fill="none"/><path d="M481 194L480.6 205L484 241L487 287L499.4 287L499.8 241L501.4 205L499.6 177L496 173Z" fill="#a8a8aa"/><path d="M481 194L480.6 205L484 241L487 287L490.6 287L488.4 241L486 205L486.6 188Z" fill="#d0d0d2"/><path d="M486.6 188L486 205L488.4 241L490.6 287L494.4 287L493.4 241L492 205L492 182Z" fill="#b6b6b8"/><path d="M496.4 178L496.6 205L496.8 241L497 287L499.4 287L499.8 241L501.4 205L499.6 177Z" fill="#8a8a8c"/><path d="M486.4 190L486 205L488.4 241L490.6 287M492 184L492 205L493.4 241L494.4 287M496.4 178L496.6 205L496.8 241L497 287M484 241L487 241.6" stroke="#3e4046" stroke-width="0.5" fill="none"/><path d="M460.6 289.5Q461 286.6 464 286.8L471.5 287.6Q475 288.6 477.6 292.6Q480.6 296 479 298.6Q474 301.4 466 301.6Q460.6 302 460 298.6Q459.6 294 460.6 289.5Z" fill="#74100c"/><path d="M463 290Q467 288.6 471.6 290.6Q474 293 473 296Q468 297.6 463.4 296.6Z" fill="#8e1612"/><path d="M487.4 289Q487.6 286 490.6 286L498.4 286.6Q502.4 288 504.6 291.6Q507.4 295 506 297.6Q501 300.4 493 300.4Q487.6 300.8 487 297.6Q486.6 293 487.4 289Z" fill="#74100c"/><path d="M490 289Q494 287.6 498.6 289.6Q501 292 500 295Q495 296.6 490.4 295.6Z" fill="#8e1612"/><path d="M462.6 172.7L496.2 172.7L494.6 181L489 188L483.6 195.4Q479.8 198 476.2 195.6L469.4 188L463.4 181Z" fill="#7e7e36"/><path d="M469.4 187.2L489.4 187.2L483.6 195.4Q479.8 198 476.2 195.6Z" fill="#68682a"/><path d="M469.4 187.2L489.4 187.2M462.6 172.7L496.2 172.7M468.6 172.7L468.6 187" stroke="#3c3c1c" stroke-width="0.45" fill="none"/><path d="M447.5 115.2Q441.5 116.5 439.7 122.9L439.6 140L441.5 156.4L452.6 168.4L457 165L455.2 163L449.4 154.7L448.6 130.6Q449 124 454 120Z" fill="#bcbcbe"/><path d="M446.4 115.6Q441.5 116.8 439.7 122.9L439.6 140L441.5 156.4L452.6 168.4L454 167L443.6 155.6L442 140L442 123.5Q443.4 118.4 447.6 116.6Z" fill="#e2e2e4"/><path d="M445.6 124L445.6 155L454.6 166.4L457 165L449.4 154.7L448.6 130.6Z" fill="#a6a6a8"/><path d="M442 123.5L442 140L443.6 155.6L454 167M445.6 124L445.6 155L455 166.4M439.7 122.9L448.6 126" stroke="#3e4046" stroke-width="0.5" fill="none"/><path d="M452.8 166L455 164.4L460.6 165L462 168L462 180.6L458 182L453.4 180.6L452.4 172Z" fill="#dedea8"/><path d="M458 166L460.6 165L462 168L462 180.6L458 182Z" fill="#b8b884"/><path d="M453.4 180.6L458 182L462 180.6L461.6 183.6L456 184L453.6 182.8Z" fill="#e8e8e0"/><path d="M458 166L458 182M452.6 170.6L462 170.6" stroke="#5a5a34" stroke-width="0.45" fill="none"/><path d="M503.6 114.4Q509 116 510.4 122.6L510.6 150L515.8 158.8L513 172L503 159.5L502.4 157.3L499.4 135L499 125Q500 118 503.6 114.4Z" fill="#b6b6b8"/><path d="M503 126L504 150L505.6 158L513.4 169.6L515.6 159L510.6 150L510.4 124Z" fill="#e0e0e2"/><path d="M499.4 135L502.4 157.3L503 159.5L511.8 170.6L505.6 158L504 150L503 128Z" fill="#a2a2a4"/><path d="M503 126L504 150L505.6 158L513 170M506.6 126L507 150L509.4 157L514.4 165.6M499 125L510.4 123" stroke="#3e4046" stroke-width="0.5" fill="none"/><path d="M513.4 160L516 157.6L521.4 158.6L523.2 161.6L523 172.6L519 174.8L514 173.4L513 166Z" fill="#dedea8"/><path d="M519 159L521.4 158.6L523.2 161.6L523 172.6L519 174.8Z" fill="#b4b480"/><path d="M515 157.6L520 156.8L521.4 158.6L516 159Z" fill="#f2f2e6"/><path d="M519 159L519 174.8M513.4 163L523 163.4" stroke="#5a5a34" stroke-width="0.45" fill="none"/><path d="M453.5 129Q453 121 459.5 115L470 112.6L470 173L462.6 173L457.8 161.5Z" fill="#a6a6a8"/><path d="M447.5 115.2Q455 112.8 470 112.5L487 112.5Q498 112.8 503.6 114.4Q500 118 499 125L496 125L495.5 114.6L459.5 115Q455 118 453.6 126L448.6 130.6Q449 124 454 120Z" fill="#c6c6c8"/><path d="M459.5 115L495.5 114.6L496 135L495.8 172.7L468.4 172.7L468 166.7L465.5 144L462 123.4Z" fill="#b8b8ba"/><path d="M459.5 115L495.5 114.6L495.8 123.2L462 123.4Z" fill="#bebec0"/><path d="M495.5 114.6L491.6 128L489.6 164.6L489.6 172.7L495.8 172.7L496 135Z" fill="#9c9c9e"/><path d="M468 164.6L489.6 164.6L489.6 172.7L468.4 172.7Z" fill="#a8a8aa"/><path d="M454 122.6Q456 117 461 116.2L462 123.4Q458 124 456.6 129.6L453.6 128.6Z" fill="#dcdcde"/><path d="M459.5 115L462 123.4L465.5 144L468 166.7L468.4 172.7M495.5 114.6L495.8 172.7M462 123.4L495.8 123.2M461.8 164.5L496 164.6M453.5 129L457.8 161.5L462.6 172.7" stroke="#3e4046" stroke-width="0.5" fill="none"/><path d="M492 129L489.4 155.4L489.4 164" stroke="#c8606a" stroke-width="0.6" fill="none"/><path d="M480.6 145.2h3.6M480.6 147h3.6M480.6 148.8h3.6" stroke="#38c8e0" stroke-width="0.8"/><path d="M469 111.6Q472 117.8 478.6 117.6Q485 117.6 486.6 111.8L484 115L472.8 115.8Z" fill="#e6e6b4"/><path d="M466.4 93.5L469.4 100.3L472.8 115.8L468.7 112.3L466.6 100Z" fill="#efe9dc"/><path d="M469.4 100.3L488.6 99.5L484 115L472.8 115.8Z" fill="#bcbc90"/><path d="M469.4 100.3L475.4 100L476.4 115.6L472.8 115.8Z" fill="#dedeb6"/><path d="M475.4 100L482 99.8L481 115.2L476.4 115.6Z" fill="#cacaa0"/><path d="M472.8 115.8L484 115L484.6 113L472.4 113.8Z" fill="#7e7e58"/><path d="M475.4 100L476.4 115.6" stroke="#6c6c48" stroke-width="0.4" fill="none"/><path d="M466.2 94C465.6 87.6 470.6 83.4 477 83.3C484.4 83.2 490.4 88 490.9 95.6L489.6 99.7L469.4 100.4Z" fill="#7a1010"/><path d="M468.4 92C469 87.6 473 85 477.4 85C482 85 485 87 486.6 90Q479 87.6 472.6 90.6Q470 92.6 469.6 96Z" fill="#8e1818"/></g>
<g filter="url(#b2)"><rect x="725" y="331.2" width="68" height="4" rx="2" fill="#8cc0f0"/><rect x="721" y="332.8" width="74" height="24.6" rx="3.4" fill="#ffffff" stroke="#c4dcf4" stroke-width="0.5"/><path d="M722 355.8Q740 358.6 760 357.6" stroke="#9cc8f0" stroke-width="0.8" fill="none"/><circle cx="742.6" cy="340.4" r="3.5" fill="#111"/><circle cx="740.8" cy="339.4" r="2.7" fill="#fff"/><path d="M738.6 349.4L740.6 348.4Q742.2 349.6 743.8 348.4L745.8 349.4L745 351.4L744 351L744 355L740.4 355L740.4 351L739.4 351.4Z" fill="#111"/><circle cx="727.4" cy="348.6" r="0.5" fill="#e8a0a0"/><circle cx="733" cy="353" r="0.5" fill="#e8c080"/><path d="M772 336Q780 334 784 342Q790 346 793.6 352Q795 356.6 790 357.2L766 357.4Q760 352 772 336Z" fill="#2c94dc"/><path d="M779 336.6Q786 336 789.6 340.6Q792.6 345 790 349Q784 346 781.6 341Z" fill="#ffffff"/><circle cx="788.6" cy="342" r="1.5" fill="#e02828"/><path d="M788 349Q794 352 794.6 356.6L786 357Z" fill="#ffffff"/><circle cx="765.6" cy="344.4" r="12.2" fill="#2c94dc"/><ellipse cx="764.4" cy="346" rx="10.6" ry="10" fill="#ffffff"/><ellipse cx="762.6" cy="337" rx="2.6" ry="3.2" fill="#fff" stroke="#333" stroke-width="0.4"/><ellipse cx="767.6" cy="336.6" rx="2.6" ry="3.2" fill="#fff" stroke="#333" stroke-width="0.4"/><circle cx="765" cy="340.4" r="1.3" fill="#e02828"/><path d="M766 343Q774 342 776.4 346.6Q774 351 768 351.6Q770 347 766 343Z" fill="#fff" stroke="#2c94dc" stroke-width="0.6"/><path d="M755 341l6 1.4M754.6 345h6M755.4 349l5.6-1.6M754 338.6Q751.6 345 756.6 352" stroke="#e06060" stroke-width="0.35" fill="none"/><path d="M757 354.6Q765 357.6 773 353.6" stroke="#e02828" stroke-width="0.9" fill="none"/><circle cx="764.6" cy="356.8" r="1.3" fill="#f0c828"/><circle cx="770.6" cy="355" r="2.4" fill="#fff" stroke="#2c94dc" stroke-width="0.4"/></g>
<g filter="url(#b1)"><rect x="49.6" y="380.6" width="10.6" height="10.4" fill="#a8b878"/><rect x="49.6" y="380.6" width="4" height="10.4" fill="#7cc884"/><rect x="54" y="384" width="6.2" height="5" fill="#b0a868"/><path d="M49.2 371.6v19.6" stroke="#2ccc4c" stroke-width="1.3"/><path d="M49.2 391h10" stroke="#58c8b8" stroke-width="1"/><path d="M58.6 390.2l3 1.6" stroke="#c82838" stroke-width="1.5"/><path d="M50.6 373l1.8 4" stroke="#5048b8" stroke-width="0.8"/><path d="M60.4 380.6v10.4" stroke="#4858a8" stroke-width="0.7"/></g>
</svg>
</body>
</html>
